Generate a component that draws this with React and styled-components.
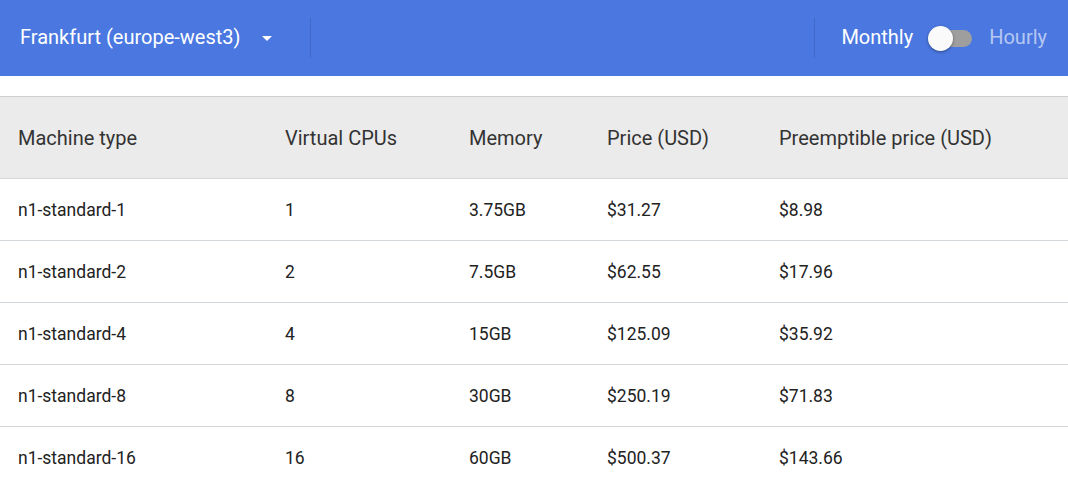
import React from 'react';
import styled, { createGlobalStyle } from 'styled-components';

const GlobalStyle = createGlobalStyle`
  body {
    margin: 0;
    background: #fff;
    font-family: Roboto, "Liberation Sans", sans-serif;
  }
`;

const Page = styled.div`
  width: 1068px;
  height: 481px;
  overflow: hidden;
`;

const TopBar = styled.div`
  height: 76px;
  background: #4a77e0;
  display: flex;
  align-items: center;
  justify-content: space-between;
  color: #fff;
`;

const Group = styled.div`
  display: flex;
  align-items: center;
  height: 100%;
`;

const RegionSelect = styled.div`
  display: flex;
  align-items: center;
  padding-left: 20px;
  font-size: 20px;
  width: 310px;
  box-sizing: border-box;
  margin-top: -2px;
  cursor: pointer;
`;

const Caret = styled.span`
  margin-left: 21px;
  width: 0;
  height: 0;
  border-left: 5px solid transparent;
  border-right: 5px solid transparent;
  border-top: 5px solid #fff;
  margin-top: 2px;
`;

const Divider = styled.div`
  width: 1px;
  height: 40px;
  background: #3f68c8;
`;

const Label = styled.span`
  font-size: 20px;
  margin-top: -2px;
  color: ${p => (p.$dim ? 'rgba(255,255,255,0.6)' : '#fff')};
`;

const Toggle = styled.div`
  position: relative;
  width: 42px;
  height: 17px;
  border-radius: 9px;
  background: #9e9e9e;
  margin: 0 17px 0 17px;
`;

const Thumb = styled.div`
  position: absolute;
  left: -2px;
  top: -4px;
  width: 25px;
  height: 25px;
  border-radius: 50%;
  background: #fafafa;
  box-shadow: 0 1px 3px rgba(0, 0, 0, 0.4);
`;

const RightGroup = styled(Group)`
  padding-right: 21px;
  ${Divider} {
    margin-right: 26px;
  }
`;

const Table = styled.div`
  margin-top: 20px;
  border-top: 1px solid #cfcfcf;
`;

const Row = styled.div`
  display: grid;
  grid-template-columns: 267px 184px 138px 172px 1fr;
  align-items: center;
  padding-left: 18px;
  height: ${p => (p.$head ? '81px' : '61px')};
  background: ${p => (p.$head ? '#ebebeb' : '#fff')};
  border-bottom: 1px solid #d3d8dd;
  font-size: ${p => (p.$head ? '20px' : '17.5px')};
  color: ${p => (p.$head ? '#333' : '#222')};
`;

const columns = ['Machine type', 'Virtual CPUs', 'Memory', 'Price (USD)', 'Preemptible price (USD)'];

const machines = [
  ['n1-standard-1', '1', '3.75GB', '$31.27', '$8.98'],
  ['n1-standard-2', '2', '7.5GB', '$62.55', '$17.96'],
  ['n1-standard-4', '4', '15GB', '$125.09', '$35.92'],
  ['n1-standard-8', '8', '30GB', '$250.19', '$71.83'],
  ['n1-standard-16', '16', '60GB', '$500.37', '$143.66'],
];

export default function App() {
  return (
    <Page>
      <GlobalStyle />
      <TopBar>
        <Group>
          <RegionSelect>
            Frankfurt (europe-west3)
            <Caret />
          </RegionSelect>
          <Divider />
        </Group>
        <RightGroup>
          <Divider />
          <Label>Monthly</Label>
          <Toggle>
            <Thumb />
          </Toggle>
          <Label $dim>Hourly</Label>
        </RightGroup>
      </TopBar>
      <Table>
        <Row $head>
          {columns.map(c => <span key={c}>{c}</span>)}
        </Row>
        {machines.map(m => (
          <Row key={m[0]}>
            {m.map((v, i) => <span key={i}>{v}</span>)}
          </Row>
        ))}
      </Table>
    </Page>
  );
}
